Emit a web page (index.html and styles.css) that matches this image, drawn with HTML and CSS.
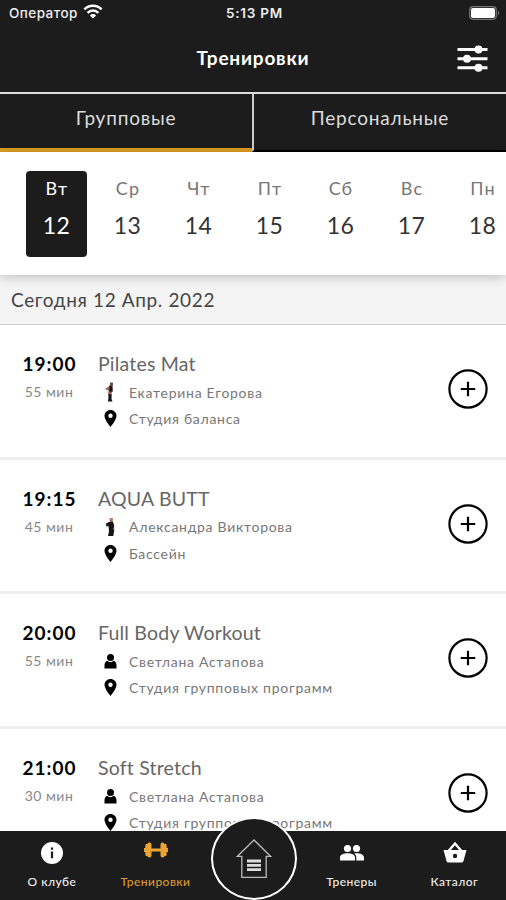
FILE: index.html
```html
<!DOCTYPE html>
<html lang="ru">
<head>
<meta charset="utf-8">
<title>Тренировки</title>
<link rel="stylesheet" href="styles.css">
</head>
<body>
<svg class="defs" aria-hidden="true">
  <symbol id="pin" viewBox="0 0 12 17"><path fill-rule="evenodd" d="M6 0C2.700 0 0 2.500 0 5.800 0 10 6 17 6 17s6-7 6-11.200C12 2.500 9.300 0 6 0zm0 8a2.200 2.200 0 1 1 0-4.400A2.200 2.200 0 0 1 6 8z"/></symbol>
  <symbol id="user" viewBox="0 0 12 15"><circle cx="6" cy="3.600" r="3.500"/><path d="M0 14.500v-3C0 9 1.300 7.300 2.800 6.800 5 8.600 7 8.600 9.200 6.800 10.700 7.300 12 9 12 11.500v3z"/></symbol>
  <symbol id="plus" viewBox="0 0 40 40"><circle cx="20" cy="20" r="18.600" fill="none" stroke="#000" stroke-width="2.200"/><path d="M20 12.800v14.400M12.800 20h14.400" stroke="#000" stroke-width="2.200"/></symbol>
</svg>
<div class="app">
  <div class="status">
    <div class="carrier"><span>Оператор</span>
      <svg width="20" height="15" viewBox="0 0 20 15" fill="none" stroke="#fff" stroke-width="2.500"><path d="M1.400 5.300a12.200 12.200 0 0 1 17.200 0M4.600 8.800a7.600 7.600 0 0 1 10.800 0"/><path d="M10 14.600L6.900 11.400a4.400 4.400 0 0 1 6.200 0z" fill="#fff" stroke="none"/></svg>
    </div>
    <div class="clock">5:13 PM</div>
    <svg class="battery" width="31" height="14" viewBox="0 0 31 14"><rect x=".7" y=".7" width="26.600" height="12.600" rx="3.500" fill="none" stroke="#777" stroke-width="1.200"/><rect x="2" y="2" width="24" height="10" rx="2" fill="#fff"/><path d="M29 4.500q2 2.500 0 5z" fill="#888"/></svg>
  </div>
  <header class="head">
    <h1>Тренировки</h1>
    <svg class="filter" width="31" height="27" viewBox="0 0 31 27" fill="#fff"><path d="M.5 3h30v3H.5zM.5 12.200h30v3H.5zM.5 21.300h30v3H.5z"/><circle cx="21.500" cy="4.500" r="4"/><circle cx="10" cy="13.700" r="4"/><circle cx="21.500" cy="22.800" r="4"/></svg>
  </header>
  <nav class="tabs">
    <div class="tab active"><span>Групповые</span></div>
    <div class="tab"><span>Персональные</span></div>
  </nav>
  <div class="days">
    <div class="day on"><span>Вт</span><b>12</b></div>
    <div class="day"><span>Ср</span><b>13</b></div>
    <div class="day"><span>Чт</span><b>14</b></div>
    <div class="day"><span>Пт</span><b>15</b></div>
    <div class="day"><span>Сб</span><b>16</b></div>
    <div class="day"><span>Вс</span><b>17</b></div>
    <div class="day"><span>Пн</span><b>18</b></div>
  </div>
  <div class="date">Сегодня 12 Апр. 2022</div>
  <main class="list">
    <article class="row">
      <div class="time"><b>19:00</b><span>55 мин</span></div>
      <div class="info">
        <h2>Pilates Mat</h2>
        <p><svg class="ic" width="12" height="20" viewBox="0 0 12 20"><path d="M4.500 3.500L8 4l.3 5.500L5 10.500 4 8z" fill="#111"/><path d="M5.500.5l3 .2L8.300 4 5.500 3.800z" fill="#693f35"/><path d="M5 4L1 6.500l1 1.500 3 .8zM3.500 9.500l4 .2L7 13l-3 .5z" fill="#9d6655"/><path d="M3.800 12l3.400.5L7 17l1 2.500H3.300L4 16z" fill="#10191d"/></svg><span>Екатерина Егорова</span></p>
        <p><svg class="ic pin"><use href="#pin"/></svg><span>Студия баланса</span></p>
      </div>
      <svg class="plus"><use href="#plus"/></svg>
    </article>
    <article class="row">
      <div class="time"><b>19:15</b><span>45 мин</span></div>
      <div class="info">
        <h2>AQUA BUTT</h2>
        <p><svg class="ic" width="12" height="20" viewBox="0 0 12 20"><path d="M4.500 5l4-.3L9.500 8l.3 5-1 6H3.500l1-5L4 9 1.800 9.500 1.500 6.500z" fill="#151515"/><path d="M5.300 1.500h3V5h-3z" fill="#9b684f"/><path d="M5 1h3.500l-.3 2-3-.5zM8.500 9.500l1.200 3-1 .5z" fill="#c08a68"/></svg><span>Александра Викторова</span></p>
        <p><svg class="ic pin"><use href="#pin"/></svg><span>Бассейн</span></p>
      </div>
      <svg class="plus"><use href="#plus"/></svg>
    </article>
    <article class="row">
      <div class="time"><b>20:00</b><span>55 мин</span></div>
      <div class="info">
        <h2>Full Body Workout</h2>
        <p><svg class="ic user"><use href="#user"/></svg><span>Светлана Астапова</span></p>
        <p><svg class="ic pin"><use href="#pin"/></svg><span>Студия групповых программ</span></p>
      </div>
      <svg class="plus"><use href="#plus"/></svg>
    </article>
    <article class="row">
      <div class="time"><b>21:00</b><span>30 мин</span></div>
      <div class="info">
        <h2>Soft Stretch</h2>
        <p><svg class="ic user"><use href="#user"/></svg><span>Светлана Астапова</span></p>
        <p><svg class="ic pin"><use href="#pin"/></svg><span>Студия групповых программ</span></p>
      </div>
      <svg class="plus"><use href="#plus"/></svg>
    </article>
  </main>
  <footer class="bar">
    <div class="item"><svg width="24" height="24" viewBox="0 0 24 24"><circle cx="12" cy="12" r="11" fill="#fff"/><path d="M10.900 6.500h2.200v2.200h-2.200zM10.900 10.600h2.200v6.600h-2.200z" fill="#1c1c1c"/></svg><span>О клубе</span></div>
    <div class="item current"><svg width="24" height="24" viewBox="0 0 24 24" fill="#eaa431"><path d="M0 7h1.300V4.500q0-1.700 1.700-1.700h.7q.3-1.300 1.800-1.300 2 0 2 2v4h9v-4q0-2 2-2 1.500 0 1.800 1.300h.7q1.700 0 1.700 1.700V7H24v4h-1.300v2.500q0 1.700-1.700 1.700h-.7q-.3 1.300-1.800 1.300-2 0-2-2v-4h-9v4q0 2-2 2-1.500 0-1.800-1.300H3q-1.700 0-1.700-1.700V11H0z"/></svg><span>Тренировки</span></div>
    <div class="gap"></div>
    <div class="item"><svg width="24" height="24" viewBox="0 0 24 24" fill="#fff"><circle cx="7.500" cy="7.500" r="3.600"/><circle cx="16.500" cy="7.500" r="3.600"/><path d="M0 19.500v-3C0 13.500 4 12.300 7.500 12.300S15 13.500 15 16.500v3zM16.300 19.500v-3c0-1.700-.8-3-2-4 4-.8 9.700.6 9.700 4v3z"/></svg><span>Тренеры</span></div>
    <div class="item"><svg width="24" height="24" viewBox="0 0 24 24"><path d="M5.500 10L12 2.500 18.500 10" fill="none" stroke="#fff" stroke-width="2.400"/><path fill-rule="evenodd" fill="#fff" d="M.5 9h23l-3 11q-.4 1.500-2 1.500h-13q-1.600 0-2-1.500zM12 12.800a2.200 2.200 0 1 0 0 4.400 2.200 2.200 0 0 0 0-4.400z"/></svg><span>Каталог</span></div>
    <div class="home"><svg width="36" height="42" viewBox="0 0 36 42" fill="none"><path d="M18 2L1.500 18.300h4.300v21h24.400v-21h4.300z" stroke="#bbb" stroke-width="1.300"/><path d="M11 23h14M11 27.300h14M11 31.700h14" stroke="#ddd" stroke-width="2.800"/></svg></div>
  </footer>
</div>
</body>
</html>
```
FILE: styles.css
```css
* { box-sizing: border-box; }
body { margin: 0; background: #fff; font-family: Lato, "Noto Sans", sans-serif; color: #222; }
.defs { position: absolute; width: 0; height: 0; }
.app { width: 506px; height: 900px; overflow: hidden; display: flex; flex-direction: column; }
svg { display: block; flex: none; }
span, b, h1, h2 { white-space: nowrap; }

.status { height: 28px; flex: none; background: #1c1c1c; color: #eee; display: grid; grid-template-columns: 1fr auto 1fr; align-items: center; padding: 0 6px 2px 9px; font: 500 13.500px Inter, sans-serif; }
.carrier { display: flex; align-items: center; gap: 5px; letter-spacing: .45px; }
.carrier svg { margin-top: -3px; }
.clock { text-align: center; font-weight: 600; letter-spacing: .75px; }
.battery { justify-self: end; }

.head { height: 64px; flex: none; background: #1c1c1c; color: #fff; display: grid; grid-template-columns: 1fr auto 1fr; align-items: center; padding: 0 18px 4px; }
.head h1 { grid-column: 2; margin: 0; font-size: 19px; font-weight: 700; line-height: 26px; letter-spacing: .8px; }
.filter { justify-self: end; }

.tabs { height: 60px; flex: none; display: flex; background: #1c1c1c; border-top: 2px solid #ddd; color: #ddd; }
.tab { flex: 1; display: flex; justify-content: center; padding-top: 12px; font-size: 19px; line-height: 24px; letter-spacing: .8px; border-bottom: 2px solid #000; }
.tab + .tab { border-left: 2px solid #ccc; }
.tab.active { border-bottom: 4px solid #dd9c22; }

.days { height: 123px; flex: none; display: flex; gap: 10px; padding: 19px 0 0 26px; background: #fff; box-shadow: 0 2px 10px rgba(0,0,0,.22); z-index: 1; overflow: hidden; }
.day { width: 61px; height: 86px; flex: none; border-radius: 4px; display: flex; flex-direction: column; align-items: center; padding-top: 5px; color: #222; }
.day span { font-size: 18px; line-height: 24px; color: #777; letter-spacing: 1.200px; margin-left: 1px; }
.day b { font-weight: 400; font-size: 23px; line-height: 30px; margin-top: 10px; letter-spacing: .5px; color: #333; }
.day.on { background: #1c1c1c; }
.day.on span, .day.on b { color: #fff; }

.date { height: 50px; flex: none; background: #f4f4f4; border-bottom: 1px solid #ccc; padding: 0 11px; font-size: 19px; line-height: 49px; color: #444; letter-spacing: .63px; }

.list { flex: 1; min-height: 0; overflow: hidden; }
.row { height: 134.600px; display: flex; padding: 27px 18px 0 0; border-bottom: 3px solid #eee; }
.time { width: 98px; display: flex; flex-direction: column; align-items: center; }
.time b { font-size: 19px; line-height: 24px; font-weight: 700; color: #000; letter-spacing: 1px; margin-left: 1px; }
.time span { font-size: 14px; line-height: 20px; margin-top: 6px; color: #888; letter-spacing: .5px; }
.info { flex: 1; }
.info h2 { margin: 0 0 3px; font-size: 19.500px; line-height: 24px; font-weight: 400; color: #666; letter-spacing: .2px; }
.info p { margin: 0; height: 26.500px; display: flex; align-items: center; gap: 12px; font-size: 14px; letter-spacing: .72px; color: #777; padding-left: 6px; }
.ic { width: 13px; height: 20px; }
.ic.pin { height: 17px; }
.ic.user { height: 15px; }
.plus { width: 40px; height: 40px; margin-top: 17px; }

.bar { height: 69px; flex: none; background: #1c1c1c; display: grid; grid-template-columns: 104px 103px 93px 103px 103px; position: relative; color: #eee; z-index: 2; }
.item { display: flex; flex-direction: column; align-items: center; padding-top: 10px; }
.item span { font-size: 12px; line-height: 16px; margin-top: 9px; font-weight: 500; letter-spacing: .45px; }
.current span { color: #d99a34; }
.home { position: absolute; left: 211px; top: -14px; width: 86px; height: 83px; border: 2px solid #fff; border-radius: 50%; background: #1c1c1c; display: flex; justify-content: center; align-items: center; }
```
